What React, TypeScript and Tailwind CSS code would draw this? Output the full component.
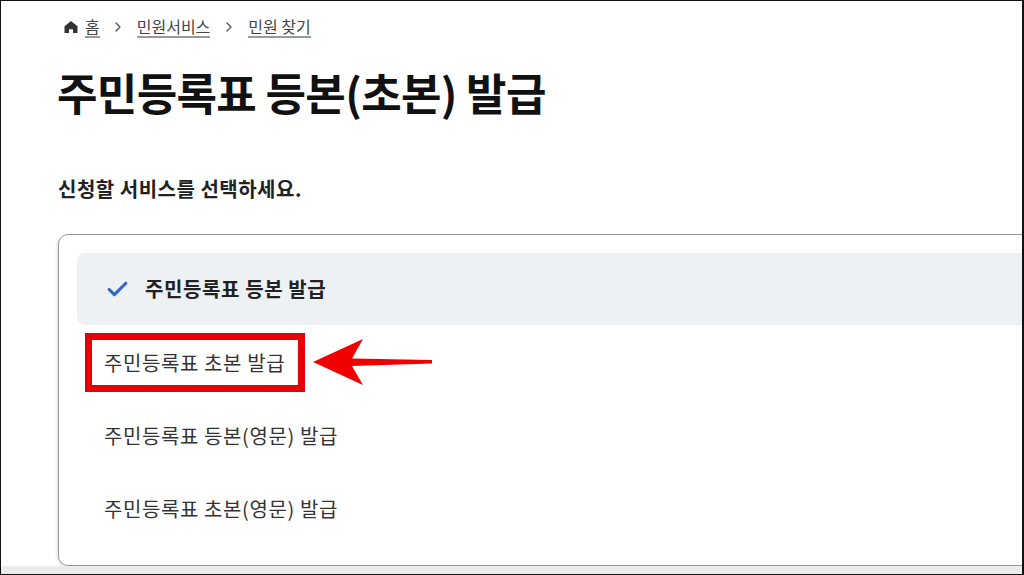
import { Check, ChevronRight } from 'lucide-react'

const font = { fontFamily: '"Noto Sans CJK KR", "Noto Sans", sans-serif' }

function HomeIcon() {
  return (
    <svg viewBox="0 0 16 16" className="w-[16px] h-[16px] text-[#333]" fill="currentColor">
      <path d="M8 2 L14.5 7.2 V14 H10 V10.2 H6 V14 H1.5 V7.2 Z" />
    </svg>
  )
}

function Arrow() {
  return (
    <svg className="absolute left-[307px] top-[333px]" width="130" height="56" viewBox="0 0 130 56">
      <path d="M5 28 L55 5 L44 24.5 L124 26 L124 29.5 L44 32 L55 51 Z" fill="#f00000" />
    </svg>
  )
}

export default function App() {
  return (
    <div className="relative w-[1024px] h-[575px] overflow-hidden bg-[#ececec] border border-[#111] border-r-2" style={font}>
      <div className="bg-white h-[565px] pl-[57px] overflow-hidden">
        <nav className="flex items-center h-[50px] pl-[5px] text-[16px] text-[#444] pt-[1px]">
          <HomeIcon />
          <span className="ml-[6px] border-b-2 border-[#999] leading-[20px]">홈</span>
          <ChevronRight className="w-[16px] h-[16px] mx-[10.5px] text-[#555]" />
          <span className="border-b-2 border-[#999] leading-[20px]">민원서비스</span>
          <ChevronRight className="w-[16px] h-[16px] mx-[11px] text-[#555]" />
          <span className="border-b-2 border-[#999] leading-[20px]">민원 찾기</span>
        </nav>
        <h1 className="text-[44px] font-bold text-[#111] leading-[60px] h-[60px] mt-[11px] -ml-[1px] tracking-[-0.65px]">
          주민등록표 등본(초본) 발급
        </h1>
        <p className="text-[20px] font-bold text-[#222] leading-[26px] mt-[54px] tracking-[0.5px]">신청할 서비스를 선택하세요.</p>
        <div className="w-[1100px] h-[332px] mt-[32px] border border-[#999] rounded-[10px] pt-[18px] pl-[18px] pr-[18px] bg-white shadow-[-1px_1px_3px_rgba(0,0,0,0.12)]">
          <div className="flex items-center h-[72px] rounded-[8px] bg-[#eef1f3] pl-[28px] text-[20px] font-bold text-[#222] tracking-[0.6px]">
            <Check className="w-[25px] h-[25px] text-[#3366cc] mr-[15px]" strokeWidth={3} />
            주민등록표 등본 발급
          </div>
          <div className="flex items-center h-[74px] pt-[1px] pl-[27px] text-[20px] text-[#333] tracking-[0.6px]">주민등록표 초본 발급</div>
          <div className="flex items-center h-[73px] pl-[27px] text-[20px] text-[#333] tracking-[0.6px]">주민등록표 등본(영문) 발급</div>
          <div className="flex items-center h-[73px] pl-[27px] text-[20px] text-[#333] tracking-[0.6px]">주민등록표 초본(영문) 발급</div>
        </div>
      </div>
      <div className="absolute left-[84px] top-[332px] w-[220px] h-[59px] border-[7px] border-[#e60008]" />
      <Arrow />
    </div>
  )
}
